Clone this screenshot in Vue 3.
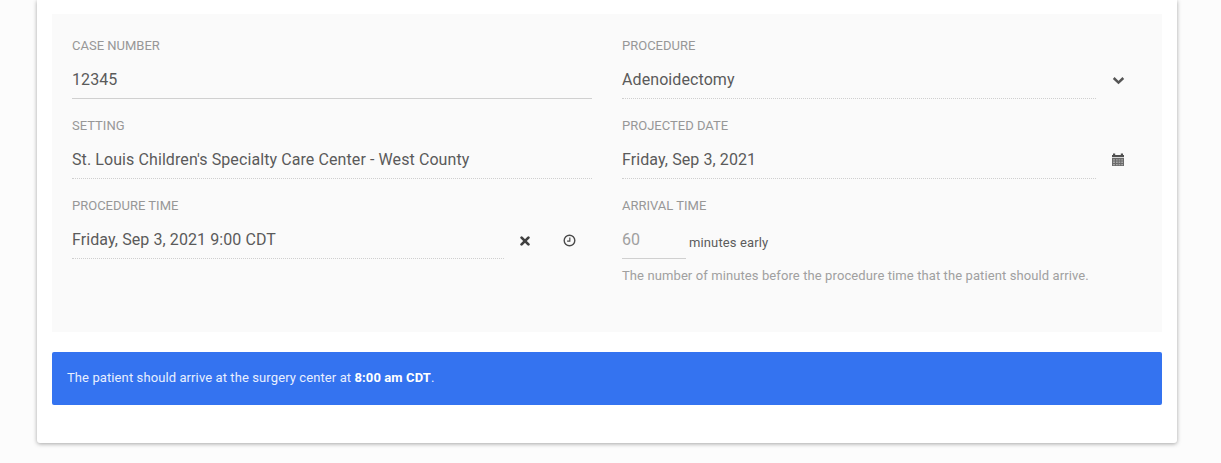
<script setup>
const hint = 'The number of minutes before the procedure time that the patient should arrive.'
</script>

<template>
  <div class="page">
    <div class="card">
      <div class="panel">
        <div class="col">
          <div class="field">
            <label>CASE NUMBER</label>
            <div class="value solid">12345</div>
          </div>
          <div class="field">
            <label>SETTING</label>
            <div class="value">St. Louis Children's Specialty Care Center - West County</div>
          </div>
          <div class="field">
            <label>PROCEDURE TIME</label>
            <div class="with-icons">
              <div class="value grow">Friday, Sep 3, 2021 9:00 CDT</div>
              <span class="icon-slot">
                <svg width="10" height="10" viewBox="0 0 10 10"><path d="M1.6 1.6 8.4 8.4M8.4 1.6 1.6 8.4" stroke="#404040" stroke-width="2.7" stroke-linecap="round" fill="none" /></svg>
              </span>
              <span class="icon-slot">
                <svg width="13" height="13" viewBox="0 0 12 12"><circle cx="6" cy="6" r="4.9" stroke="#4a4a4a" stroke-width="1.3" fill="none" /><path d="M6.3 3.2V6.5H3.8" stroke="#4a4a4a" stroke-width="1.1" fill="none" /></svg>
              </span>
            </div>
          </div>
        </div>
        <div class="col">
          <div class="field">
            <label>PROCEDURE</label>
            <div class="with-icon">
              <div class="value grow">Adenoidectomy</div>
              <span class="side-icon chevron">
                <svg width="13" height="9" viewBox="0 0 13 9"><path d="M1.7 2 6.5 6.6 11.3 2" stroke="#555" stroke-width="2.5" fill="none" /></svg>
              </span>
            </div>
          </div>
          <div class="field">
            <label>PROJECTED DATE</label>
            <div class="with-icon">
              <div class="value grow">Friday, Sep 3, 2021</div>
              <span class="side-icon">
                <svg width="12" height="13" viewBox="0 0 12 13">
                  <path d="M0 2h12v2.2H0z" fill="#505050" />
                  <path d="M1 .6h2.2V2H1zM8.8.6H11V2H8.8z" fill="#505050" />
                  <path d="M0 5h12v8H0z" fill="#6a6a6a" />
                  <path d="M1 6.2h2v1.4H1zM4 6.2h1.7v1.4H4zM6.6 6.2h1.7v1.4H6.6zM9.2 6.2H11v1.4H9.2zM1 8.6h2V10H1zM4 8.6h1.7V10H4zM6.6 8.6h1.7V10H6.6zM9.2 8.6H11V10H9.2zM1 11h2v1.2H1zM4 11h1.7v1.2H4zM6.6 11h1.7v1.2H6.6zM9.2 11H11v1.2H9.2z" fill="#a6a6a6" />
                </svg>
              </span>
            </div>
          </div>
          <div class="field">
            <label>ARRIVAL TIME</label>
            <div class="arrival">
              <div class="value solid minutes">60</div>
              <span class="unit">minutes early</span>
            </div>
            <p class="hint">{{ hint }}</p>
          </div>
        </div>
      </div>
      <div class="alert">The patient should arrive at the surgery center at <strong>8:00 am CDT</strong>.</div>
    </div>
  </div>
</template>

<style scoped>
.page { background:#fcfcfc; height:463px; overflow:hidden; padding:0 44px 0 37px; box-sizing:border-box; font-family:Roboto, "Liberation Sans", sans-serif; }
.card { background:#fff; height:443px; box-sizing:border-box; padding:14px 15px 0; border-radius:0 0 3px 3px; box-shadow:0 1px 4px rgba(0,0,0,0.35); }
.panel { background:#fafafa; height:318px; box-sizing:border-box; padding:20px; display:grid; grid-template-columns:520px 520px; column-gap:30px; }
.field { height:80px; }
label { display:block; font-size:13px; line-height:14px; height:14px; padding-top:5px; color:#979797; }
.value { font-size:16px; line-height:20px; height:46px; box-sizing:border-box; padding-top:17px; color:#5a5a5a; border-bottom:1px dotted #cfcfcf; letter-spacing:0.09px; }
.value.solid { border-bottom:1px solid #d0d0d0; }
.with-icon, .with-icons, .arrival { display:flex; align-items:flex-start; }
.grow { flex:1; min-width:0; }
.side-icon { width:46px; height:46px; display:flex; align-items:center; justify-content:center; padding:6px 2px 0 0; box-sizing:border-box; }
.side-icon.chevron { padding-top:8px; }
.icon-slot { width:44px; height:46px; display:flex; align-items:center; justify-content:center; padding:9px 2px 0 0; box-sizing:border-box; }
.with-icons .grow { flex:none; width:432px; }
.minutes { width:64px; color:#a0a0a0; }
.unit { font-size:13px; line-height:16px; color:#5c5c5c; margin:22px 0 0 3px; letter-spacing:0.12px; }
.hint { margin:9px 0 0; font-size:13px; line-height:16px; color:#a0a0a0; letter-spacing:0.1px; white-space:nowrap; }
.alert { margin-top:20px; height:53px; box-sizing:border-box; padding:18px 15px 0; background:#3473f0; border-radius:2px; color:#e8efff; font-size:13px; line-height:16px; letter-spacing:0.1px; }
.alert strong { color:#fff; font-weight:700; }
</style>

<style>
html, body { background:#fcfcfc; }
</style>
